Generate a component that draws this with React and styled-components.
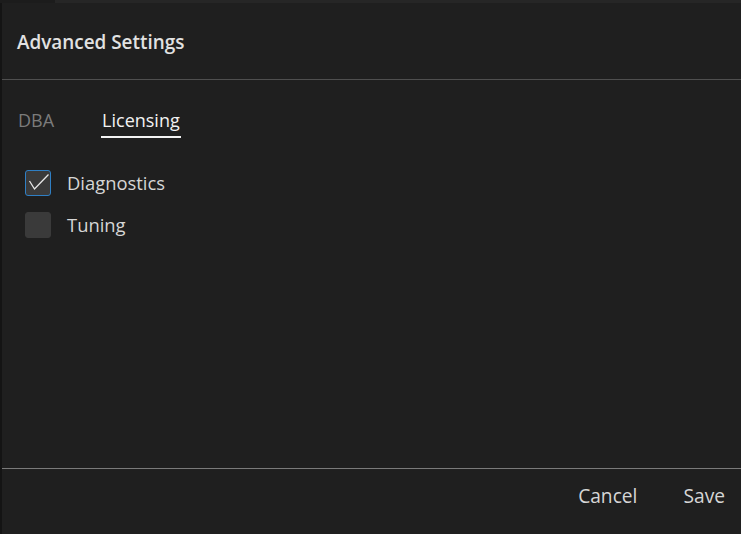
import React, { useState } from 'react';
import styled, { createGlobalStyle } from 'styled-components';

const GlobalStyle = createGlobalStyle`
  html, body {
    margin: 0;
    padding: 0;
    height: 100%;
    background: #141414;
  }
  #root {
    height: 100%;
  }
  * {
    box-sizing: border-box;
  }
`;

const Page = styled.div`
  height: 534px;
  display: flex;
  flex-direction: column;
  font-family: 'Open Sans', 'Noto Sans', sans-serif;
`;

const TopStrip = styled.div`
  height: 3px;
  flex: none;
  display: flex;
`;

const StripPart = styled.div`
  width: ${p => p.$width || 'auto'};
  flex: ${p => (p.$width ? 'none' : 1)};
  background: ${p => p.$color};
`;

const Dialog = styled.div`
  flex: 1;
  margin-left: 2px;
  background: #1f1f1f;
  display: flex;
  flex-direction: column;
`;

const Header = styled.div`
  height: 77px;
  flex: none;
  padding: 1px 15px 0;
  display: flex;
  align-items: center;
  border-bottom: 1px solid #4f4f4f;
`;

const Title = styled.h1`
  margin: 0;
  font-size: 18.9px;
  font-weight: 600;
  color: #e2e2e2;
`;

const Body = styled.div`
  flex: 1;
  padding: 0 15px;
  display: flex;
  flex-direction: column;
`;

const Tabs = styled.div`
  display: flex;
  gap: 46px;
  margin-top: 28px;
`;

const Tab = styled.button`
  background: none;
  border: none;
  padding: 0 1px 4px;
  font-family: inherit;
  font-size: 18px;
  color: ${p => (p.$active ? '#f2f2f2' : '#7b7b7b')};
  border-bottom: 2px solid ${p => (p.$active ? '#f2f2f2' : 'transparent')};
  cursor: pointer;
  line-height: 24px;
`;

const Options = styled.div`
  display: flex;
  flex-direction: column;
  gap: 16px;
  margin-top: 32px;
  padding-left: 8px;
`;

const Option = styled.label`
  display: flex;
  align-items: center;
  gap: 16px;
  cursor: pointer;
`;

const Box = styled.span`
  width: 26px;
  height: 26px;
  border-radius: 3px;
  background: #3a3a3a;
  border: 1px solid ${p => (p.$checked ? '#2f7fc4' : '#3a3a3a')};
  display: flex;
  align-items: center;
  justify-content: center;
`;

const Label = styled.span`
  font-size: 18.4px;
  color: #d6d6d6;
  line-height: 24px;
`;

const Footer = styled.div`
  height: 66px;
  flex: none;
  border-top: 1px solid #7a7a7a;
  display: flex;
  align-items: flex-start;
  justify-content: flex-end;
  gap: 46px;
  padding: 15px 16px 0 0;
`;

const FooterButton = styled.button`
  background: none;
  border: none;
  padding: 0;
  font-family: inherit;
  font-size: 19.2px;
  line-height: 24px;
  color: #d6d6d6;
  cursor: pointer;
`;

const CheckMark = () => (
  <svg width="24" height="24" viewBox="0 0 24 24" fill="none">
    <path d="M3.5 10 L8.5 18 L22.5 3.5" stroke="#e8e8e8" strokeWidth="1.3" />
  </svg>
);

const App = () => {
  const [tab, setTab] = useState('licensing');
  const [options, setOptions] = useState({ diagnostics: true, tuning: false });

  const toggle = key => setOptions({ ...options, [key]: !options[key] });

  return (
    <>
      <GlobalStyle />
      <Page>
        <TopStrip>
          <StripPart $width="55px" $color="#1c1c1c" />
          <StripPart $color="#262626" />
        </TopStrip>
        <Dialog>
          <Header>
            <Title>Advanced Settings</Title>
          </Header>
          <Body>
            <Tabs>
              <Tab $active={tab === 'dba'} onClick={() => setTab('dba')}>DBA</Tab>
              <Tab $active={tab === 'licensing'} onClick={() => setTab('licensing')}>Licensing</Tab>
            </Tabs>
            <Options>
              <Option onClick={() => toggle('diagnostics')}>
                <Box $checked={options.diagnostics}>{options.diagnostics && <CheckMark />}</Box>
                <Label>Diagnostics</Label>
              </Option>
              <Option onClick={() => toggle('tuning')}>
                <Box $checked={options.tuning}>{options.tuning && <CheckMark />}</Box>
                <Label>Tuning</Label>
              </Option>
            </Options>
          </Body>
          <Footer>
            <FooterButton>Cancel</FooterButton>
            <FooterButton>Save</FooterButton>
          </Footer>
        </Dialog>
      </Page>
    </>
  );
};

export default App;
